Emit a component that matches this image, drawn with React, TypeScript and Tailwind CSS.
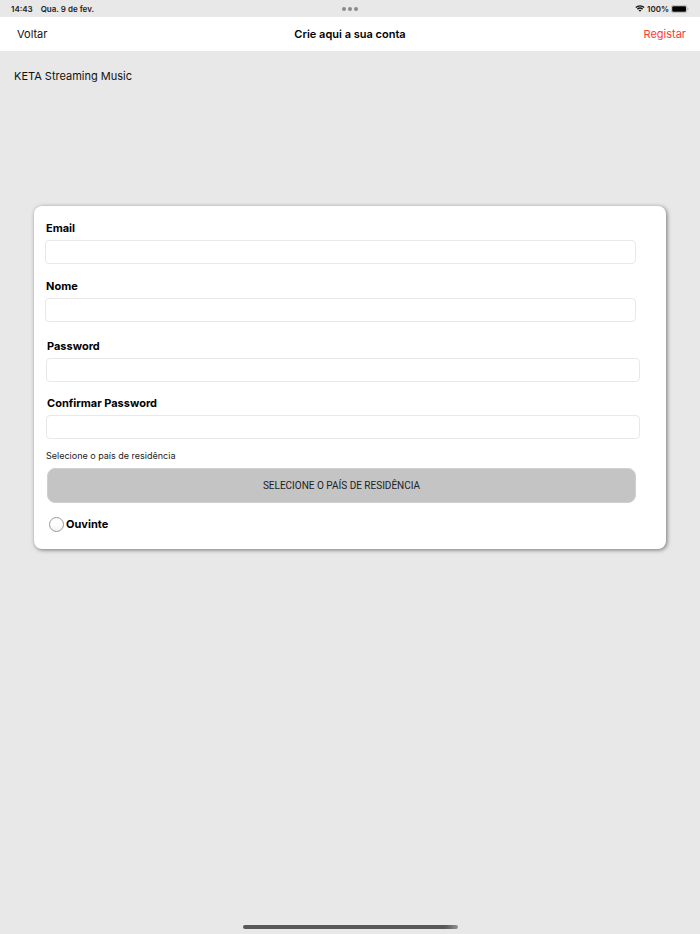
import { useState } from "react";

export default function App() {
  return (
    <div className="flex min-h-screen flex-col bg-[#e8e8e8] font-['Inter','Liberation_Sans',sans-serif] text-[11px] leading-4 text-black">
      <StatusBar />
      <header className="grid h-[34px] grid-cols-3 items-center bg-white px-3.5">
        <button type="button" className="justify-self-start pl-[3px] text-[#111]">
          Voltar
        </button>
        <h1 className="justify-self-center font-semibold whitespace-nowrap">Crie aqui a sua conta</h1>
        <button type="button" className="justify-self-end text-[#ff3b30]">
          Registar
        </button>
      </header>
      <main className="flex-1">
        <p className="px-3.5 pt-[17px] text-[#111]">KETA Streaming Music</p>
        <SignUpForm />
      </main>
      <div className="mx-auto mb-[5px] h-1 w-[215px] rounded-full bg-linear-to-r from-[#555957] from-94% to-[#909291]" />
    </div>
  );
}

function StatusBar() {
  return (
    <div className="grid h-[17px] grid-cols-3 items-center px-[11px] text-[8px] font-semibold text-[#222]">
      <div className="flex gap-2">
        <span>14:43</span>
        <span>Qua. 9 de fev.</span>
      </div>
      <div className="flex justify-center gap-0.5">
        <span className="size-1 rounded-full bg-[#8a8a8a]" />
        <span className="size-1 rounded-full bg-[#8a8a8a]" />
        <span className="size-1 rounded-full bg-[#8a8a8a]" />
      </div>
      <div className="flex items-center justify-end gap-0.5">
        <WifiIcon />
        <span>100%</span>
        <BatteryIcon />
      </div>
    </div>
  );
}

function SignUpForm() {
  const [listener, setListener] = useState(false);

  return (
    <form className="mx-[34px] mt-[122px] rounded-lg bg-white pt-3.5 pr-[26px] pb-[17px] pl-[11px] shadow-[1px_1px_4px_rgba(0,0,0,0.5)]">
      <div className="mr-1 space-y-3.5">
        <Field id="email" label="Email" type="email" />
        <Field id="name" label="Nome" type="text" />
      </div>
      <div className="mt-4 ml-px space-y-[13px]">
        <Field id="password" label="Password" type="password" />
        <Field id="confirm" label="Confirmar Password" type="password" />
      </div>
      <p id="country" className="mt-[9px] ml-px text-[9px] leading-4 text-[#222]">
        Selecione o país de residência
      </p>
      <button
        type="button"
        aria-describedby="country"
        className="mt-1 mr-1 ml-0.5 block h-[35px] w-[calc(100%-6px)] rounded-lg border border-[#cfcfcf] bg-[#c4c4c4] font-['Roboto','Inter',sans-serif] text-[10px] text-[#222]"
      >
        SELECIONE O PAÍS DE RESIDÊNCIA
      </button>
      <label className="mt-[13px] ml-1 flex w-fit items-center gap-0.5 font-bold">
        <input
          type="radio"
          name="role"
          checked={listener}
          onChange={() => setListener(true)}
          className="size-[15px] appearance-none rounded-full border border-[#999] bg-linear-to-b from-white from-50% to-[#f2f2f2] checked:bg-[#555]"
        />
        Ouvinte
      </label>
    </form>
  );
}

function Field({ id, label, type }: { id: string; label: string; type: string }) {
  return (
    <div>
      <label htmlFor={id} className="ml-px block font-bold">
        {label}
      </label>
      <input id={id} type={type} className="mt-1 block h-6 w-full rounded border border-[#e8e8e8] bg-white px-2" />
    </div>
  );
}

function WifiIcon() {
  return (
    <svg viewBox="0 0 20 15" className="h-[7px] w-2.5" fill="none" stroke="#111" strokeWidth="2.8">
      <path d="M1 5.4a13 13 0 0 1 18 0" />
      <path d="M4.4 9a8.2 8.2 0 0 1 11.2 0" />
      <path d="M10 14.6 6.9 11.5a4.4 4.4 0 0 1 6.2 0z" fill="#111" stroke="none" />
    </svg>
  );
}

function BatteryIcon() {
  return (
    <svg viewBox="0 0 36 16" className="h-2 w-[18px]">
      <rect x="0.7" y="0.7" width="31" height="14.6" rx="4" fill="none" stroke="#999" strokeWidth="1.2" />
      <rect x="2.4" y="2.4" width="27.6" height="11.2" rx="2.4" fill="#000" />
      <path d="M33.2 5.4c2.4.8 2.4 4.4 0 5.2z" fill="#999" />
    </svg>
  );
}
